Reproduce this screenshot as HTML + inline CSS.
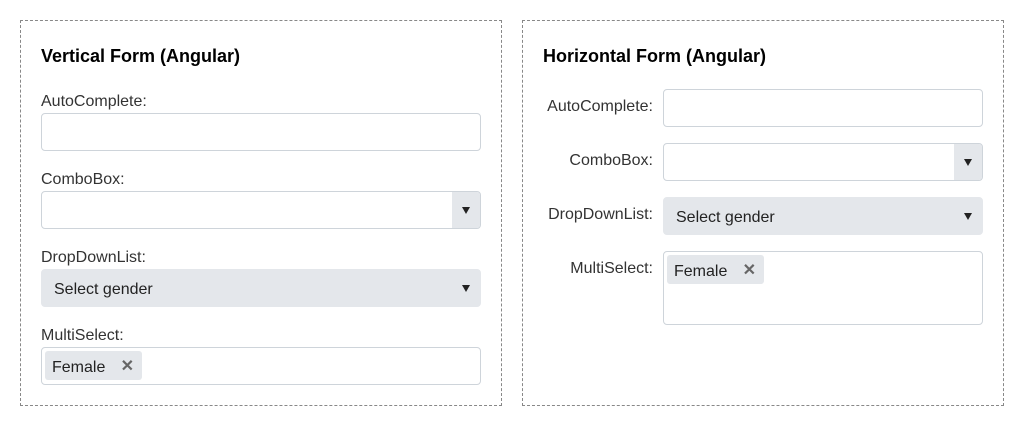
<!DOCTYPE html><html><head><style>
body{margin:0;background:#fff;font-family:"Liberation Sans",sans-serif;color:#212529;width:1024px;height:446px;position:relative;overflow:hidden}
.p{position:absolute;border:1px dashed #888;box-sizing:border-box}
h{position:absolute;font-weight:bold;font-size:18px;color:#000}
.l{position:absolute;font-size:16px;color:#333}
.i{position:absolute;border:1px solid #ced4da;border-radius:4px;box-sizing:border-box;background:#fff;overflow:hidden}
.d{background:#e4e7eb;border-color:#e4e7eb}
.btn{position:absolute;right:0;top:0;bottom:0;width:28px;background:#e4e7eb}
.ar{position:absolute;width:0;height:0;border-left:4.5px solid transparent;border-right:4.5px solid transparent;border-top:7px solid #222}
.t{position:absolute;font-size:16px;color:#222}
.chip{position:absolute;background:#e4e7eb;border-radius:3px;height:29px;width:97px;font-size:16px;line-height:29px;color:#222}
.chip span{position:absolute;left:7px;top:2px}
.chip b{position:absolute;right:8px;top:1px;font-weight:bold;color:#666;font-size:16px}
</style></head><body>
<div class="p" style="left:20px;top:20px;width:482px;height:386px"></div>
<div class="p" style="left:522px;top:20px;width:482px;height:386px"></div>

<h style="left:41px;top:46px">Vertical Form (Angular)</h>
<div class="l" style="left:41px;top:93px">AutoComplete:</div>
<div class="i" style="left:41px;top:113px;width:440px;height:38px"></div>
<div class="l" style="left:41px;top:171px">ComboBox:</div>
<div class="i" style="left:41px;top:191px;width:440px;height:38px"><div class="btn"><div class="ar" style="left:10px;top:15px"></div></div></div>
<div class="l" style="left:41px;top:249px">DropDownList:</div>
<div class="i d" style="left:41px;top:269px;width:440px;height:38px"><div class="t" style="left:12px;top:11px">Select gender</div><div class="ar" style="right:10px;top:15px"></div></div>
<div class="l" style="left:41px;top:327px">MultiSelect:</div>
<div class="i" style="left:41px;top:347px;width:440px;height:38px"><div class="chip" style="left:3px;top:3px"><span>Female</span><b>✕</b></div></div>

<h style="left:543px;top:46px">Horizontal Form (Angular)</h>
<div class="l" style="left:543px;width:110px;text-align:right;top:98px">AutoComplete:</div>
<div class="i" style="left:663px;top:89px;width:320px;height:38px"></div>
<div class="l" style="left:543px;width:110px;text-align:right;top:152px">ComboBox:</div>
<div class="i" style="left:663px;top:143px;width:320px;height:38px"><div class="btn"><div class="ar" style="left:10px;top:15px"></div></div></div>
<div class="l" style="left:543px;width:110px;text-align:right;top:206px">DropDownList:</div>
<div class="i d" style="left:663px;top:197px;width:320px;height:38px"><div class="t" style="left:12px;top:11px">Select gender</div><div class="ar" style="right:10px;top:15px"></div></div>
<div class="l" style="left:543px;width:110px;text-align:right;top:260px">MultiSelect:</div>
<div class="i" style="left:663px;top:251px;width:320px;height:74px"><div class="chip" style="left:3px;top:3px"><span>Female</span><b>✕</b></div></div>
</body></html>
